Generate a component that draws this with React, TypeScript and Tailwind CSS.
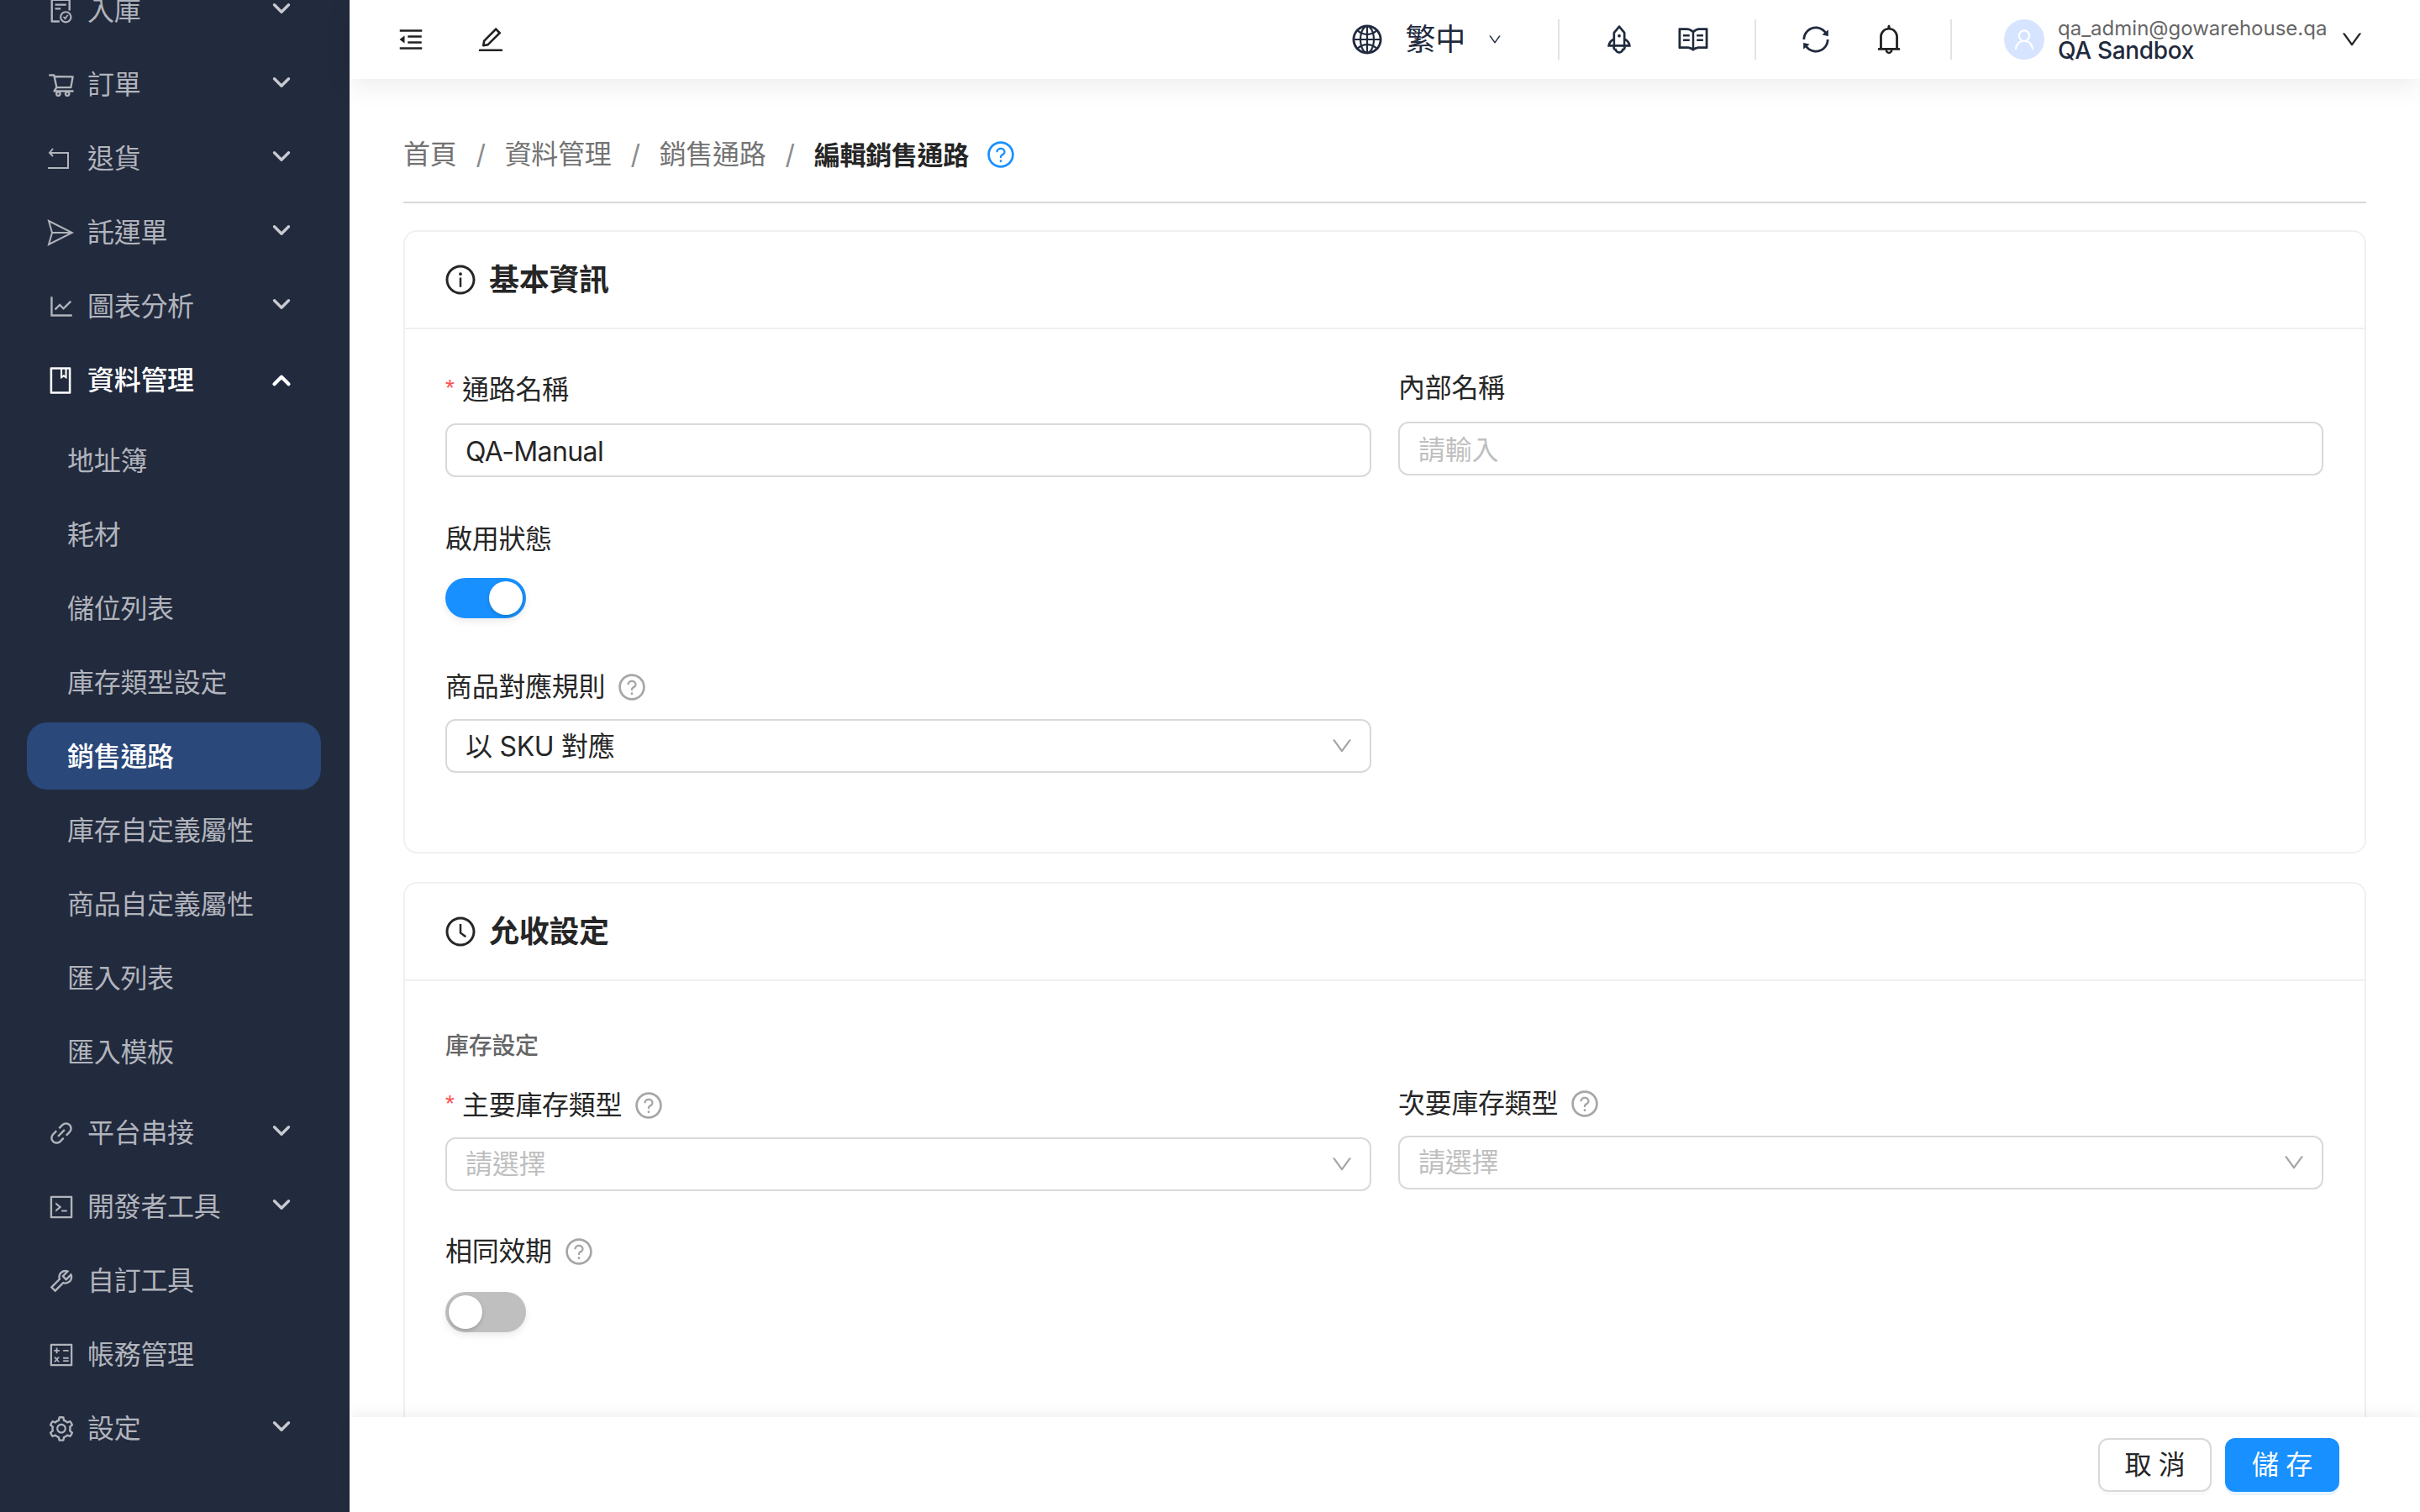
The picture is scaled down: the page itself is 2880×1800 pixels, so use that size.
import React from "react";
import {
  AiOutlineBell,
  AiOutlineBook,
  AiOutlineCalculator,
  AiOutlineClockCircle,
  AiOutlineCode,
  AiOutlineDown,
  AiOutlineEdit,
  AiOutlineFileDone,
  AiOutlineGlobal,
  AiOutlineInfoCircle,
  AiOutlineLineChart,
  AiOutlineLink,
  AiOutlineMenuFold,
  AiOutlineQuestionCircle,
  AiOutlineRead,
  AiOutlineRocket,
  AiOutlineSetting,
  AiOutlineShoppingCart,
  AiOutlineSync,
  AiOutlineTool,
  AiOutlineUser,
} from "react-icons/ai";
import { ChevronDown, ChevronUp } from "lucide-react";

function ReturnIcon() {
  return (
    <svg viewBox="0 0 28 28" className="h-7 w-7" fill="none" stroke="currentColor" strokeWidth="2">
      <path d="M4 7h21v18H1" />
      <path d="M7 2 3 7l4 4" />
    </svg>
  );
}

function PlaneIcon() {
  return (
    <svg viewBox="0 0 32 32" className="h-8 w-8" fill="none" stroke="currentColor" strokeWidth="2">
      <path d="M2 2 30 16 2 30l4-14z" />
      <path d="M6 16h24" />
    </svg>
  );
}

function NavRow({ icon, label, arrow = true }: { icon: React.ReactNode; label: string; arrow?: boolean }) {
  return (
    <div className="flex h-[88px] items-center pl-[56px] pr-[64px] text-[32px] text-[#b1b4bc]">
      <span className="flex w-[48px] shrink-0 items-center text-[34px]">{icon}</span>
      <span className="flex-1 leading-none">{label}</span>
      {arrow && <ChevronDown className="mb-[6px] h-[34px] w-[34px] text-[#c8cad0]" strokeWidth={2.4} />}
    </div>
  );
}

function SubRow({ label, active }: { label: string; active?: boolean }) {
  return (
    <div
      className={
        active
          ? "my-[4px] ml-[32px] mr-[34px] flex h-[80px] items-center rounded-[24px] bg-[#2a4879] pl-[48px] pt-[2px] text-[32px] font-medium text-white"
          : "ml-[32px] mr-[34px] flex h-[88px] items-center pl-[48px] pt-[2px] text-[32px] text-[#b1b4bc]"
      }
    >
      {label}
    </div>
  );
}

function Sidebar() {
  return (
    <aside className="h-full w-[416px] shrink-0 overflow-hidden bg-[#222a3d]">
      <div className="-mt-[31px]">
        <NavRow icon={<AiOutlineFileDone />} label="入庫" />
        <NavRow icon={<AiOutlineShoppingCart />} label="訂單" />
        <NavRow icon={<ReturnIcon />} label="退貨" />
        <NavRow icon={<PlaneIcon />} label="託運單" />
        <NavRow icon={<AiOutlineLineChart />} label="圖表分析" />
        <div className="flex h-[88px] items-center pl-[56px] pr-[64px] text-[32px] font-medium text-white">
          <span className="-ml-[2px] mr-[2px] flex w-[48px] shrink-0 items-center text-[36px]">
            <AiOutlineBook />
          </span>
          <span className="flex-1 leading-none">資料管理</span>
          <ChevronUp className="h-[34px] w-[34px]" strokeWidth={3} />
        </div>
        <div className="pb-[9px] pt-[7px]">
          <SubRow label="地址簿" />
          <SubRow label="耗材" />
          <SubRow label="儲位列表" />
          <SubRow label="庫存類型設定" />
          <SubRow label="銷售通路" active />
          <SubRow label="庫存自定義屬性" />
          <SubRow label="商品自定義屬性" />
          <SubRow label="匯入列表" />
          <SubRow label="匯入模板" />
        </div>
        <NavRow icon={<AiOutlineLink />} label="平台串接" />
        <NavRow icon={<AiOutlineCode />} label="開發者工具" />
        <NavRow icon={<AiOutlineTool />} label="自訂工具" arrow={false} />
        <NavRow icon={<AiOutlineCalculator />} label="帳務管理" arrow={false} />
        <NavRow icon={<AiOutlineSetting />} label="設定" />
      </div>
    </aside>
  );
}

function Header() {
  return (
    <header className="relative z-10 flex h-[94px] shrink-0 items-center bg-white pl-[56px] pr-[66px] text-[#1f2a3d] shadow-[0_8px_32px_rgba(0,0,0,0.08)]">
      <AiOutlineMenuFold className="text-[34px] text-[#222]" />
      <AiOutlineEdit className="ml-[60px] text-[36px] text-[#222]" />
      <div className="ml-auto flex items-center">
        <AiOutlineGlobal className="text-[40px]" />
        <span className="ml-[26px] text-[36px] leading-none">繁中</span>
        <AiOutlineDown className="ml-[26px] text-[18px]" />
        <span className="ml-[66px] mr-[51px] block h-[48px] w-[2px] bg-[#e2e3e5]" />
        <AiOutlineRocket className="text-[40px]" />
        <AiOutlineRead className="ml-[48px] text-[40px]" />
        <span className="ml-[53px] mr-[52px] block h-[48px] w-[2px] bg-[#e2e3e5]" />
        <AiOutlineSync className="text-[38px]" />
        <AiOutlineBell className="ml-[48px] text-[40px] text-[#222]" />
        <span className="ml-[53px] mr-[62px] block h-[48px] w-[2px] bg-[#e2e3e5]" />
        <span className="flex h-[48px] w-[48px] items-center justify-center rounded-full bg-[#d6e4ff] text-[30px] text-white">
          <AiOutlineUser />
        </span>
        <div className="ml-[16px] flex w-[317px] flex-col">
          <span className="text-[24px] leading-[26px] tracking-[0px] text-[#666]">qa_admin@gowarehouse.qa</span>
          <span className="text-[28px] font-medium leading-[26px] text-[#1f2a3d]">QA Sandbox</span>
        </div>
        <AiOutlineDown className="ml-[18px] text-[30px] text-[#222]" />
      </div>
    </header>
  );
}

function Help({ blue }: { blue?: boolean }) {
  return <AiOutlineQuestionCircle className={blue ? "text-[36px] text-[#1890ff]" : "text-[36px] text-[#a6a6a6]"} />;
}

function Label({ text, required, help }: { text: string; required?: boolean; help?: boolean }) {
  return (
    <div className="flex h-[40px] items-center text-[32px] leading-none text-[#262626]">
      {required && <span className="mr-[6px] w-[14px] self-start pt-[4px] font-['Liberation_Sans'] text-[28px] text-[#ff4d4f]">*</span>}
      <span>{text}</span>
      {help && <span className="ml-[14px] flex"><Help /></span>}
    </div>
  );
}

function Field({ value, placeholder, select, tight }: { value?: string; placeholder?: string; select?: boolean; tight?: boolean }) {
  return (
    <div className={tight ? "mt-[18px] flex h-[64px] items-center rounded-[12px] border-2 border-[#d9d9d9] bg-white pl-[22px] pr-[18px] text-[32px]" : "mt-[20px] flex h-[64px] items-center rounded-[12px] border-2 border-[#d9d9d9] bg-white pl-[22px] pr-[18px] text-[32px]"}>
      <span className={value ? (select ? "flex-1 pt-[2px] text-[#262626]" : "flex-1 pt-[4px] tracking-[-0.6px] text-[#262626]") : select ? "flex-1 text-[#bfbfbf]" : "flex-1 pt-[4px] text-[#bfbfbf]"}>
        {value ?? placeholder}
      </span>
      {select && <AiOutlineDown className="text-[30px] text-[#a6a6a6]" />}
    </div>
  );
}

function Toggle({ on }: { on?: boolean }) {
  return (
    <div className={on ? "mt-[26px] flex h-[48px] w-[96px] items-center justify-end rounded-full bg-[#1890ff] px-[4px] shadow-[0_4px_8px_rgba(0,0,0,0.08)]" : "mt-[28px] flex h-[48px] w-[96px] items-center rounded-full bg-[#bfbfbf] px-[4px] shadow-[0_4px_8px_rgba(0,0,0,0.08)]"}>
      <span className="h-[40px] w-[40px] rounded-full bg-white shadow-[0_2px_4px_rgba(0,35,11,0.2)]" />
    </div>
  );
}

function CardHead({ icon, title }: { icon: React.ReactNode; title: string }) {
  return (
    <div className="flex h-[116px] items-center gap-[14px] border-b-2 border-[#f0f0f0] pl-[46px] text-[36px] font-semibold text-[#262626]">
      <span className="flex text-[40px]">{icon}</span>
      <span className="leading-none">{title}</span>
    </div>
  );
}

export default function App() {
  return (
    <div className="flex h-[1800px] w-[2880px] overflow-hidden bg-white font-['Inter','Noto_Sans_CJK_TC',sans-serif] tracking-[-0.3px]">
      <Sidebar />
      <main className="relative flex min-w-0 flex-1 flex-col">
        <Header />
        <div className="min-h-0 flex-1 overflow-hidden pl-[64px] pr-[64px]">
          <div className="flex h-[148px] items-center border-b-2 border-[#d9d9d9] pt-[34px] text-[32px] leading-none text-[#737373]">
            <span>首頁</span>
            <span className="mx-[23px] text-[#8c8c8c]">/</span>
            <span>資料管理</span>
            <span className="mx-[23px] text-[#8c8c8c]">/</span>
            <span>銷售通路</span>
            <span className="mx-[23px] text-[#8c8c8c]">/</span>
            <span className="text-[31px] font-semibold text-[#262626]">編輯銷售通路</span>
            <span className="ml-[20px] flex"><Help blue /></span>
          </div>

          <section className="mt-[32px] h-[742px] rounded-[16px] border-2 border-[#f0f0f0] bg-white">
            <CardHead icon={<AiOutlineInfoCircle />} title="基本資訊" />
            <div className="px-[48px] pt-[52px]">
              <div className="grid grid-cols-[1102px_1101px] gap-x-[32px]">
                <div>
                  <Label text="通路名稱" required />
                  <Field value="QA-Manual" />
                </div>
                <div className="-mt-[2px]">
                  <Label text="內部名稱" />
                  <Field placeholder="請輸入" />
                </div>
              </div>
              <div className="mt-[54px]">
                <Label text="啟用狀態" />
                <Toggle on />
              </div>
              <div className="mt-[62px] w-[1102px]">
                <Label text="商品對應規則" help />
                <Field value="以 SKU 對應" select tight />
              </div>
            </div>
          </section>

          <section className="mt-[34px] rounded-t-[16px] border-2 border-b-0 border-[#f0f0f0] bg-white pb-[200px]">
            <CardHead icon={<AiOutlineClockCircle />} title="允收設定" />
            <div className="px-[48px] pt-[60px]">
              <div className="text-[28px] font-medium leading-[34px] text-[#666]">庫存設定</div>
              <div className="mt-[34px] grid grid-cols-[1102px_1101px] gap-x-[32px]">
                <div>
                  <Label text="主要庫存類型" required help />
                  <Field placeholder="請選擇" select tight />
                </div>
                <div className="-mt-[2px]">
                  <Label text="次要庫存類型" help />
                  <Field placeholder="請選擇" select tight />
                </div>
              </div>
              <div className="mt-[52px]">
                <Label text="相同效期" help />
                <Toggle />
              </div>
            </div>
          </section>
        </div>
        <footer className="absolute bottom-0 left-0 right-0 z-10 flex h-[113px] items-start justify-end gap-[16px] bg-white pr-[96px] pt-[25px] shadow-[0_-6px_12px_rgba(0,0,0,0.05)]">
          <button className="h-[64px] w-[135px] rounded-[12px] border-2 border-[#d9d9d9] bg-white text-[32px] leading-none text-[#262626] shadow-[0_4px_0_rgba(0,0,0,0.02)]">取 消</button>
          <button className="h-[64px] w-[136px] rounded-[12px] bg-[#1890ff] text-[32px] leading-none text-white shadow-[0_4px_0_rgba(5,145,255,0.1)]">儲 存</button>
        </footer>
      </main>
    </div>
  );
}
